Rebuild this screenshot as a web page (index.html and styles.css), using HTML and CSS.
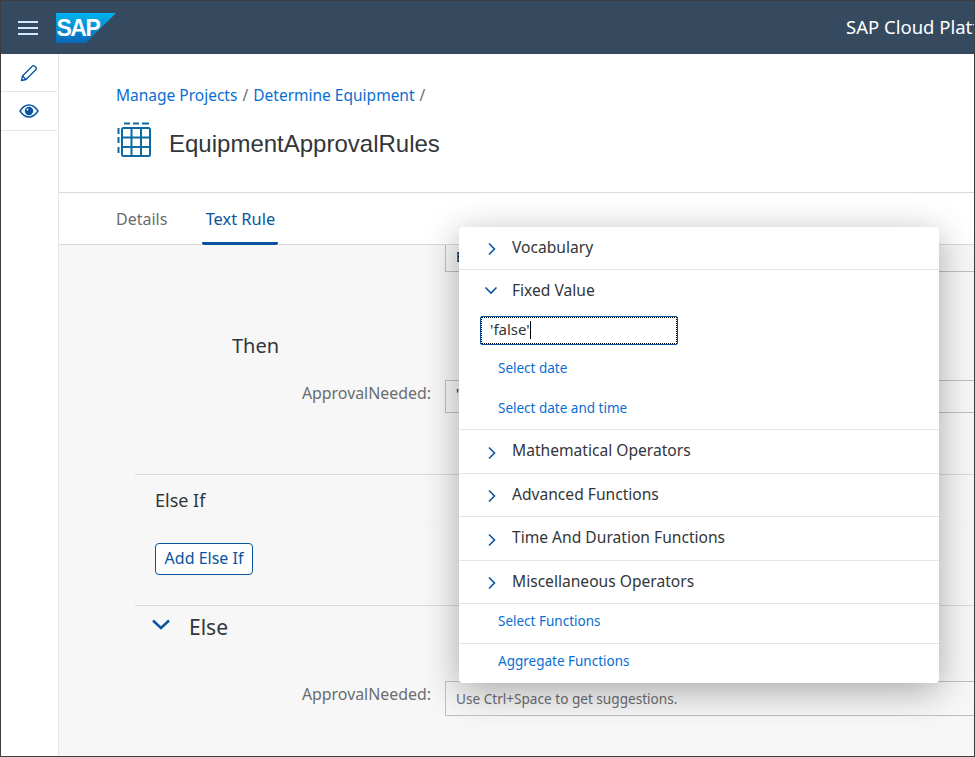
FILE: index.html
```html
<!DOCTYPE html>
<html lang="en">
<head>
  <meta charset="UTF-8" />
  <meta name="viewport" content="width=device-width, initial-scale=1.0" />
  <title>EquipmentApprovalRules</title>
  <link rel="stylesheet" href="styles.css">
</head>
<body>
<div class="frame">
  <header class="shell">
    <button class="menu-btn" aria-label="Menu"><span></span><span></span><span></span></button>
    <svg class="sap-logo" width="60" height="30" viewBox="0 0 60 30">
      <defs>
        <linearGradient id="sapBlue" x1="0" y1="0" x2="0" y2="1">
          <stop offset="0" stop-color="#00b4ef"/>
          <stop offset="1" stop-color="#0a68b8"/>
        </linearGradient>
      </defs>
      <polygon points="0,0 60,0 30,30 0,30" fill="url(#sapBlue)"/>
      <text x="0.5" y="22.5" class="sap-logo-text">SAP</text>
    </svg>
    <div class="shell-title">SAP Cloud Platform</div>
  </header>

  <div class="workspace">
    <nav class="sidebar">
      <div class="side-item">
        <svg width="18" height="18" viewBox="0 0 18 18" fill="none" stroke="#0854a0" stroke-width="1.3" stroke-linejoin="round">
          <path d="M1.5 16.5l1-4.500L12.500 2a1.400 1.400 0 0 1 2 0l1.500 1.500a1.400 1.400 0 0 1 0 2L6 15.500z"/>
          <path d="M2.500 12l3.500 3.500"/>
        </svg>
      </div>
      <div class="side-item">
        <svg width="20" height="16" viewBox="0 0 20 16">
          <path d="M1 8c2.500-3.800 5.500-6 9-6s6.500 2.200 9 6c-2.500 3.800-5.500 6-9 6s-6.500-2.200-9-6z" fill="none" stroke="#0854a0" stroke-width="1.400"/>
          <circle cx="10" cy="8" r="4.200" fill="#0854a0"/>
          <circle cx="8.500" cy="6.500" r="1" fill="#fff"/>
        </svg>
      </div>
    </nav>

    <main class="main">
      <section class="page-head">
        <div class="breadcrumb">
          <a>Manage Projects</a> <span>/</span> <a>Determine Equipment</a> <span>/</span>
        </div>
        <div class="page-title">
          <svg width="36" height="36" viewBox="0 0 36 36" fill="none" stroke="#0b6aa2" stroke-width="2">
            <rect x="6" y="6" width="28" height="28" rx="1.500"/>
            <path d="M15.500 6v28M25 6v28M6 15.500h28M6 25h28"/>
            <path d="M8 1.500h6M17 1.500h6M26 1.500h7M2.500 6v6M2.500 15v6M2.500 25v6"/>
          </svg>
          <h1>EquipmentApprovalRules</h1>
        </div>
      </section>

      <div class="tabs">
        <div class="tab">Details</div>
        <div class="tab tab-active">Text Rule</div>
      </div>

      <section class="rule">
        <div class="field field-top">
          <label></label>
          <div class="rule-input dark-text">E</div>
        </div>
        <h2 class="then">Then</h2>
        <div class="field field-then">
          <label>ApprovalNeeded:</label>
          <div class="rule-input dark-text">'</div>
        </div>

        <div class="else-if">
          <div class="else-if-head">Else If</div>
          <button class="add-btn">Add Else If</button>
        </div>

        <div class="else-block">
          <div class="else-head">
            <svg width="18" height="11" viewBox="0 0 18 11" fill="none" stroke="#0854a0" stroke-width="2.400"><path d="M1 1.500l8 7.500 8-7.500"/></svg>
            <span>Else</span>
          </div>
          <div class="field field-else">
            <label>ApprovalNeeded:</label>
            <div class="rule-input">Use Ctrl+Space to get suggestions.</div>
          </div>
        </div>
      </section>
    </main>
  </div>

  <!-- suggestion popover -->
  <div class="popover">
    <div class="acc-row">
      <svg class="chev" width="10" height="14" viewBox="0 0 10 14"><path d="M2 1.500L7.500 7 2 12.500"/></svg>
      <span>Vocabulary</span>
    </div>
    <div class="fixed-value">
      <div class="acc-row acc-open">
        <svg class="chev chev-down" width="14" height="10" viewBox="0 0 14 10"><path d="M1.500 2.500L7 8l5.500-5.500"/></svg>
        <span>Fixed Value</span>
      </div>
      <div class="value-input">'false'<span class="caret"></span></div>
      <a class="pop-link">Select date</a>
      <a class="pop-link">Select date and time</a>
    </div>
    <div class="acc-row row-44">
      <svg class="chev" width="10" height="14" viewBox="0 0 10 14"><path d="M2 1.500L7.500 7 2 12.500"/></svg>
      <span>Mathematical Operators</span>
    </div>
    <div class="acc-row">
      <svg class="chev" width="10" height="14" viewBox="0 0 10 14"><path d="M2 1.500L7.500 7 2 12.500"/></svg>
      <span>Advanced Functions</span>
    </div>
    <div class="acc-row row-44">
      <svg class="chev" width="10" height="14" viewBox="0 0 10 14"><path d="M2 1.500L7.500 7 2 12.500"/></svg>
      <span>Time And Duration Functions</span>
    </div>
    <div class="acc-row">
      <svg class="chev" width="10" height="14" viewBox="0 0 10 14"><path d="M2 1.500L7.500 7 2 12.500"/></svg>
      <span>Miscellaneous Operators</span>
    </div>
    <a class="pop-link link-row">Select Functions</a>
    <a class="pop-link link-last">Aggregate Functions</a>
  </div>
</div>
</body>
</html>
```

FILE: styles.css
```css
* {
  box-sizing: border-box;
}
body {
  margin: 0;
  font-family: "Noto Sans", "Open Sans", sans-serif;
  color: #32363a;
}
.frame {
  position: relative;
  width: 975px;
  height: 757px;
  display: flex;
  flex-direction: column;
  overflow: hidden;
  border: 1px solid #3d3d3d;
  background: #fff;
}

/* shell bar */
.shell {
  flex: none;
  height: 53px;
  display: flex;
  align-items: center;
  background: #354a5f;
  white-space: nowrap;
}
.menu-btn {
  flex: none;
  width: 20px;
  height: 14px;
  margin-left: 17px;
  padding: 0;
  border: none;
  background: none;
  display: flex;
  flex-direction: column;
  justify-content: space-between;
}
.menu-btn span {
  display: block;
  height: 2px;
  background: #d1e8ff;
}
.sap-logo {
  flex: none;
  margin-left: 18px;
}
.sap-logo-text {
  font-family: "Liberation Sans", sans-serif;
  font-size: 23px;
  font-weight: bold;
  letter-spacing: -1.500px;
  fill: #fff;
}
.shell-title {
  flex: none;
  margin: -2px 0 0 730px;
  font-size: 18.500px;
  color: #fff;
}

/* left rail */
.workspace {
  flex: 1;
  display: flex;
  min-height: 0;
}
.sidebar {
  flex: none;
  width: 58px;
  border-right: 1px solid #e5e5e5;
  padding-right: 1px;
  background: #fff;
}
.side-item {
  height: 38px;
  display: flex;
  align-items: center;
  justify-content: center;
  border-bottom: 1px solid #e5e5e5;
}
.side-item + .side-item {
  height: 39px;
}

.main {
  flex: 1;
  min-width: 0;
  display: flex;
  flex-direction: column;
}
.page-head {
  flex: none;
  height: 139px;
  padding: 30px 0 0 57px;
  border-bottom: 1px solid #d9d9d9;
}
.breadcrumb {
  height: 22px;
  font-size: 15.500px;
  line-height: 22px;
  color: #6a6d70;
}
.breadcrumb a {
  color: #0a6ed1;
}
.breadcrumb span {
  margin: 0 1px;
}
.page-title {
  display: flex;
  align-items: center;
  height: 36px;
  margin-top: 16px;
}
.page-title h1 {
  margin: 8px 0 0 17px;
  font-family: "Liberation Sans", sans-serif;
  font-size: 24px;
  font-weight: 400;
  white-space: nowrap;
}

.tabs {
  flex: none;
  height: 52px;
  display: flex;
  padding-left: 57px;
  border-bottom: 1px solid #d9d9d9;
}
.tab {
  height: 52px;
  margin-right: 35px;
  line-height: 52px;
  font-size: 16px;
  color: #6a6d70;
}
.tab-active {
  width: 76px;
  margin-left: 0;
  text-align: center;
  font-size: 16.400px;
  color: #0854a0;
  border-bottom: 3px solid #0854a0;
  border-radius: 0 0 2px 2px;
}

/* rule editor behind the popover */
.rule {
  flex: 1;
  min-height: 0;
  padding-left: 76px;
  background: #f7f7f7;
}
.field {
  display: flex;
  align-items: flex-start;
  margin-right: -20px;
}
.field label {
  flex: none;
  width: 296px;
  text-align: right;
  font-size: 15.900px;
  line-height: 26px;
  color: #6a6d70;
}
.rule-input {
  flex: 1;
  margin-left: 14px;
  padding-left: 10px;
  border: 1px solid #bfbfbf;
  background: #f7f7f7;
  font-size: 13.600px;
  color: #6a6d70;
}
.dark-text {
  color: #111;
}
.field-top .rule-input {
  height: 27px;
  line-height: 24px;
  border-top: none;
  font-size: 14px;
}
.then {
  height: 26px;
  margin: 61px 0 0 97px;
  font-size: 20px;
  line-height: 26px;
  font-weight: 400;
}
.field-then {
  margin-top: 21px;
}
.field-then .rule-input {
  height: 33px;
  line-height: 26px;
}
.else-if {
  margin-top: 61px;
  height: 132px;
  border-top: 1px solid #d9d9d9;
  border-bottom: 1px solid #d9d9d9;
  margin-right: -20px;
}
.else-if-head {
  height: 53px;
  padding-left: 20px;
  border-bottom: 1px solid #f4f4f4;
  font-size: 18px;
  line-height: 51px;
}
.add-btn {
  display: block;
  width: 98px;
  height: 32px;
  margin: 15px 0 0 20px;
  padding: 0 0 2px;
  border: 1px solid #0854a0;
  border-radius: 4px;
  background: #fff;
  font-family: inherit;
  font-size: 16px;
  color: #0854a0;
}
.else-head {
  height: 42px;
  display: flex;
  align-items: center;
  padding-left: 17px;
  font-size: 21px;
}
.else-head span {
  margin-left: 19px;
}
.else-head svg {
  margin-top: -5px;
}
.field-else {
  margin-top: 33px;
}
.field-else .rule-input {
  height: 35px;
  line-height: 34px;
}

/* popover */
.popover {
  position: absolute;
  left: 458px;
  top: 226px;
  width: 480px;
  height: 456px;
  background: #fff;
  border-radius: 4px;
  box-shadow: 0 8px 36px rgba(0, 0, 0, 0.32);
  white-space: nowrap;
}
.acc-row {
  height: 43px;
  display: flex;
  align-items: center;
  padding-left: 28px;
  padding-bottom: 2px;
  border-bottom: 1px solid #e5e5e5;
  font-size: 15.600px;
}
.acc-row span {
  margin-left: 15px;
}
.chev {
  flex: none;
  margin-top: 3px;
  fill: none;
  stroke: #0854a0;
  stroke-width: 1.600;
}
.row-44 {
  height: 44px;
  padding-bottom: 3px;
}
.row-44 .chev {
  margin-top: 5px;
}
.acc-open {
  height: 41px;
  padding-left: 25px;
  border-bottom: none;
}
.acc-open span {
  margin-left: 14px;
}
.chev-down {
  margin-top: 0;
}
.fixed-value {
  height: 160px;
  border-bottom: 1px solid #e5e5e5;
}
.value-input {
  width: 198px;
  height: 29px;
  margin: 5px 0 3px 21px;
  padding-left: 9px;
  border: 1px solid #0854a0;
  border-radius: 2px;
  outline: 1px dotted #000;
  outline-offset: -2px;
  font-size: 15px;
  line-height: 25px;
}
.caret {
  display: inline-block;
  width: 1px;
  height: 18px;
  vertical-align: -4px;
  background: #000;
}
.pop-link {
  display: block;
  height: 40px;
  padding-left: 39px;
  font-size: 13.500px;
  line-height: 40px;
  color: #0a6ed1;
}
.link-row {
  line-height: 34px;
  border-bottom: 1px solid #e5e5e5;
}
.link-last {
  height: 39px;
  line-height: 34px;
}
```
